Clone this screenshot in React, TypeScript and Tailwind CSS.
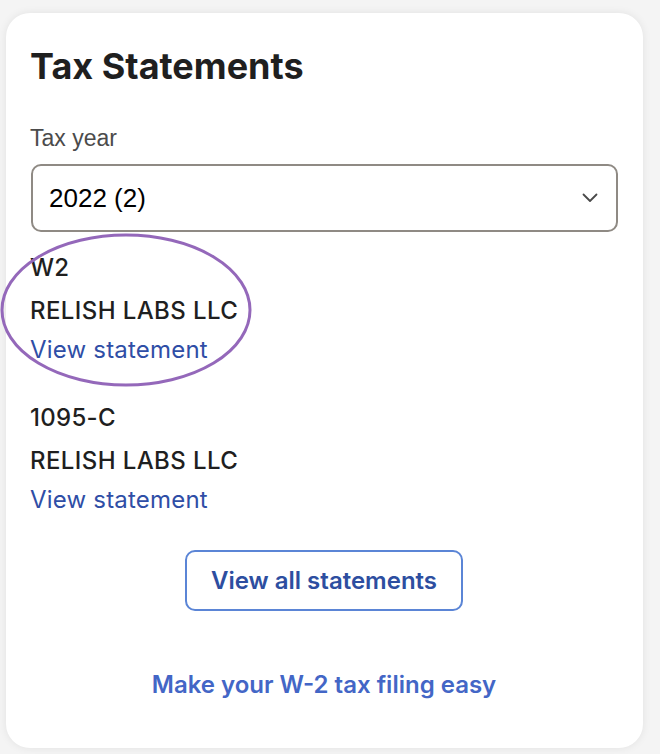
import React from 'react';

interface Statement {
  form: string;
  employer: string;
}

const statements: Statement[] = [
  { form: 'W2', employer: 'RELISH LABS LLC' },
  { form: '1095-C', employer: 'RELISH LABS LLC' },
];

const sans = { fontFamily: 'Inter, "Noto Sans", sans-serif' };
const helv = { fontFamily: '"Liberation Sans", Arial, sans-serif' };

const App: React.FC = () => {
  return (
    <div className="min-h-[754px] w-[660px] bg-[#f4f4f4] pt-[13px] pl-[6px]" style={sans}>
      <div className="relative w-[637px] h-[735px] rounded-[24px] bg-white shadow-[0_0_8px_rgba(0,0,0,0.08)] pl-[24px] pr-[25px] pt-[33px]">
        <h2 className="text-[36px] leading-[40px] font-bold text-[#1f1f1f]">Tax Statements</h2>

        <p className="mt-[38px] text-[23px] leading-[28px] text-[#4b4b4b]" style={helv}>
          Tax year
        </p>

        {/* year picker */}
        <div className="mt-[12px] ml-[1px] h-[68px] rounded-[10px] border-2 border-[#8f8a84] flex items-center justify-between pl-[16px] pr-[18px]">
          <span className="text-[26px] text-black" style={helv}>2022 (2)</span>
          <svg width="16" height="10" viewBox="0 0 16 10" fill="none">
            <path d="M1.5 1.5 L8 8 L14.5 1.5" stroke="#4a4a4a" strokeWidth="1.8" strokeLinecap="round" strokeLinejoin="round" />
          </svg>
        </div>

        <div className="mt-[14px]">
          {statements.map((s, i) => (
            <div key={s.form} className={i > 0 ? 'mt-[28px]' : ''}>
              <p className="text-[24px] leading-[44px] font-medium text-[#1f1f1f] tracking-[0.3px]">{s.form}</p>
              <p className="text-[24px] leading-[42px] font-medium text-[#1f1f1f] tracking-[0.4px]">{s.employer}</p>
              <a className="block text-[24px] leading-[36px] text-[#2f4ea6] tracking-[0.2px]">View statement</a>
            </div>
          ))}
        </div>

        <div className="mt-[32px] flex justify-center">
          <button className="h-[61px] w-[278px] rounded-[10px] border-2 border-[#5b85d6] text-[24px] font-semibold text-[#2d4ea0]">
            View all statements
          </button>
        </div>

        <p className="mt-[59px] text-center text-[24px] leading-[30px] font-semibold text-[#4366c6]">
          Make your W-2 tax filing easy
        </p>

        {/* highlight annotation */}
        <svg
          className="absolute left-[-6px] top-[220px] pointer-events-none"
          width="256"
          height="156"
          viewBox="0 0 256 156"
        >
          <ellipse cx="126" cy="77" rx="124" ry="75" fill="none" stroke="#9468ba" strokeWidth="3" />
        </svg>
      </div>
    </div>
  );
};

export default App;
